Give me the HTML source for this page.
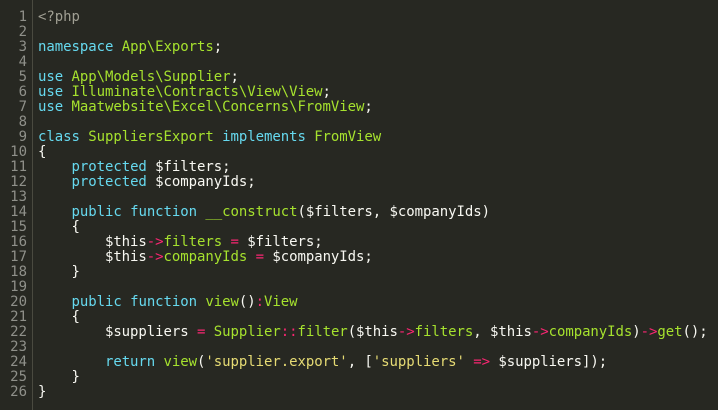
<!DOCTYPE html>
<html><head><meta charset="utf-8"><style>
html,body{margin:0;padding:0;background:#272822;width:718px;height:410px;overflow:hidden}
.g{position:absolute;left:0;top:0;width:32px;height:410px;border-right:1px solid #4a4a40}
.n{position:absolute;left:0;top:10px;width:27px;text-align:right;color:#8f908a}
.c{position:absolute;left:38px;top:10px;color:#f8f8f2;white-space:pre;letter-spacing:-0.06px}
.n,.c{font:14px/15px "DejaVu Sans Mono","Liberation Mono",monospace}
.k{color:#66d9ef}.t{color:#a6e22e}.o{color:#f92672}.s{color:#e6db74}.m{color:#a09f93}
</style></head><body>
<div class="g"></div>
<div class="n">1<br>2<br>3<br>4<br>5<br>6<br>7<br>8<br>9<br>10<br>11<br>12<br>13<br>14<br>15<br>16<br>17<br>18<br>19<br>20<br>21<br>22<br>23<br>24<br>25<br>26</div>
<div class="c"><span class="m">&lt;?php</span>

<span class="k">namespace</span> <span class="t">App\Exports</span>;

<span class="k">use</span> <span class="t">App\Models\Supplier</span>;
<span class="k">use</span> <span class="t">Illuminate\Contracts\View\View</span>;
<span class="k">use</span> <span class="t">Maatwebsite\Excel\Concerns\FromView</span>;

<span class="k">class</span> <span class="t">SuppliersExport</span> <span class="k">implements</span> <span class="t">FromView</span>
{
    <span class="k">protected</span> $filters;
    <span class="k">protected</span> $companyIds;

    <span class="k">public</span> <span class="k">function</span> <span class="t">__construct</span>($filters, $companyIds)
    {
        $this<span class="o">-&gt;</span><span class="t">filters</span> <span class="o">=</span> $filters;
        $this<span class="o">-&gt;</span><span class="t">companyIds</span> <span class="o">=</span> $companyIds;
    }

    <span class="k">public</span> <span class="k">function</span> <span class="t">view</span>()<span class="o">:</span><span class="t">View</span>
    {
        $suppliers <span class="o">=</span> <span class="t">Supplier</span><span class="o">::</span><span class="t">filter</span>($this<span class="o">-&gt;</span><span class="t">filters</span>, $this<span class="o">-&gt;</span><span class="t">companyIds</span>)<span class="o">-&gt;</span><span class="t">get</span>();

        <span class="k">return</span> <span class="t">view</span>(<span class="s">'supplier.export'</span>, [<span class="s">'suppliers'</span> <span class="o">=&gt;</span> $suppliers]);
    }
}</div>
</body></html>
